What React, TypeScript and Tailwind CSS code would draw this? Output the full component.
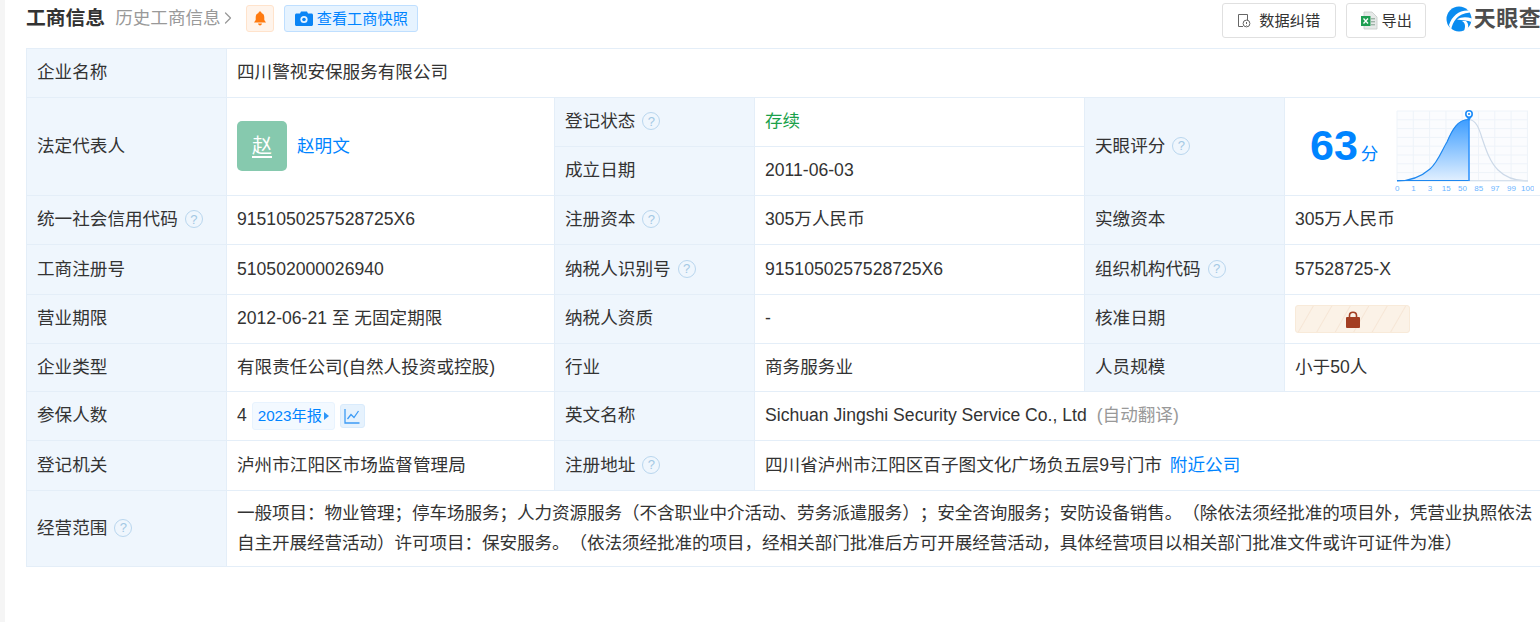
import React from "react";
import { ChevronRight } from "lucide-react";

const FONT = "font-['Liberation_Sans','Noto_Sans_CJK_SC',sans-serif]";
const label = "border border-[#e4eef8] bg-[#eff6fd] px-[10px] pb-[2px] text-left font-normal";
const value = "border border-[#e4eef8] bg-white px-[10px] pb-[2px]";

// full-width punctuation, as on the page
const SCOPE_1 =
  "一般项目\uFF1A物业管理\uFF1B停车场服务\uFF1B人力资源服务\uFF08不含职业中介活动、劳务派遣服务\uFF09\uFF1B安全咨询服务\uFF1B安防设备销售。\uFF08除依法须经批准的项目外\uFF0C凭营业执照依法";
const SCOPE_2 =
  "自主开展经营活动\uFF09许可项目\uFF1A保安服务。\uFF08依法须经批准的项目\uFF0C经相关部门批准后方可开展经营活动\uFF0C具体经营项目以相关部门批准文件或许可证件为准\uFF09";

const Help = () => (
  <span className="relative -top-[1px] ml-[7px] inline-flex h-[18px] w-[18px] items-center justify-center rounded-full border-[1.5px] border-[#b9d6ee] align-middle text-[13px] leading-none text-[#a3c8e4]">
    ?
  </span>
);

const Link = ({ children }: { children: React.ReactNode }) => (
  <span className="text-[#0084ff]">{children}</span>
);

const ScoreChart = () => {
  const cols = [0, 1, 2, 3, 4, 5, 6, 7, 8];
  const rows = [0, 1, 2, 3, 4, 5, 6, 7, 8];
  const ticks = ["0", "1", "3", "15", "50", "85", "97", "99", "100"];
  return (
    <svg width="140" height="90" viewBox="0 0 140 90" className="block">
      <defs>
        <linearGradient id="fill" x1="0" y1="0" x2="0" y2="1">
          <stop offset="0" stopColor="#3d9dff" />
          <stop offset="1" stopColor="#e2f0ff" />
        </linearGradient>
      </defs>
      <rect x="3" y="9" width="131" height="70" fill="#fbfcfe" />
      {cols.map((c) => (
        <line key={c} x1={3 + c * 16.3} x2={3 + c * 16.3} y1="9" y2="79" stroke="#eef3f9" strokeWidth="1" />
      ))}
      {rows.map((r) => (
        <line key={r} x1="3" x2="134" y1={9 + r * 8.8} y2={9 + r * 8.8} stroke="#eef3f9" strokeWidth="1" />
      ))}
      <path d="M3 79C18 79 28 74 36 67C44 60 48 48 53 40C58 28 64 17 75 17.5L75 79Z" fill="url(#fill)" />
      <path d="M3 79C18 79 28 74 36 67C44 60 48 48 53 40C58 28 64 17 75 17.5" fill="none" stroke="#1e88f0" strokeWidth="1.2" />
      <path d="M75 17.5C82 18 85 26 88 36C92 48 96 60 104 68C112 76 124 79 134 79" fill="none" stroke="#ccd9e8" strokeWidth="1.2" />
      <line x1="3" x2="75" y1="78.5" y2="78.5" stroke="#1e88f0" strokeWidth="1" />
      <line x1="134" x2="75" y1="78.5" y2="78.5" stroke="#d5e0ec" strokeWidth="1" />
      <line x1="75" x2="75" y1="16" y2="79" stroke="#3295ff" strokeWidth="1.6" />
      <circle cx="75" cy="12" r="3.2" fill="#fff" stroke="#1e8cf8" strokeWidth="1.6" />
      <circle cx="75" cy="12" r="1.1" fill="#1e8cf8" />
      <path d="M72.5 15L75 19L77.5 15Z" fill="#1e8cf8" />
      {ticks.map((t, i) => (
        <text key={t} x={3.3 + i * 16.3} y="88.5" textAnchor="middle" fontSize="8" fill="#6db6ff" fontFamily="Liberation Sans, sans-serif">
          {t}
        </text>
      ))}
    </svg>
  );
};

const Logo = () => (
  <svg width="26" height="26" viewBox="0 0 26 26" className="block shrink-0">
    <circle cx="13" cy="13" r="12.5" fill="#0a8cf0" />
    <path d="M5 24C7 15 11 8 24 6.5L22.5 4.5C13 4 6 10 3 19Z" fill="#fff" />
    <path d="M11 13.5C15 11 20 10.5 26 12.5L25.5 16C22 14.5 16 14 11 13.5Z" fill="#fff" />
    <path d="M16 15C19 16.5 20 20 18 25L21.5 23C23 20 22 16.5 20 15Z" fill="#fff" />
  </svg>
);

const ExcelIcon = () => (
  <svg width="18" height="19" viewBox="0 0 18 19" className="block">
    <path d="M4 1H12L17 6V18H4Z" fill="#e6e9e8" stroke="#c4c9c7" strokeWidth="0.8" />
    <rect x="11" y="7" width="4" height="1.4" fill="#9fb3a8" />
    <rect x="11" y="10" width="4" height="1.4" fill="#9fb3a8" />
    <rect x="11" y="13" width="4" height="1.4" fill="#9fb3a8" />
    <rect x="1" y="5" width="9.5" height="10" fill="#1e9e52" />
    <path d="M3.5 7.5L8 12.5M8 7.5L3.5 12.5" stroke="#fff" strokeWidth="1.3" />
  </svg>
);

const App = () => {
  return (
    <div className={`flex h-[622px] w-[1540px] overflow-hidden bg-white text-[17.6px] leading-[24px] text-[#333] [text-spacing-trim:space-all] ${FONT}`}>
      <div className="w-[5px] shrink-0 bg-[#f5f5f5]" />
      <div className="ml-[21px] w-[1600px] shrink-0">
        <div className="flex h-[48px] items-start">
          <div className="flex items-center pt-[5px]">
            <span className="relative -top-[1px] text-[19.8px] font-bold leading-[24px]">工商信息</span>
            <span className="relative -top-[1px] ml-[10px] text-[#999]">历史工商信息</span>
            <ChevronRight size={20} strokeWidth={1.5} className="relative -top-[1px] -ml-[3px] -mr-[2px] text-[#999]" />
            <span className="ml-[10px] flex h-[27px] w-[28px] items-center justify-center rounded-[3px] border border-[#ffe3cc] bg-[#fff4eb]">
              <svg width="14" height="15" viewBox="0 0 14 15">
                <path d="M7 0.5C8 0.5 8.5 1.2 8.5 2C10.5 2.6 11.3 4.2 11.3 6.5V9L13 11.5H1L2.7 9V6.5C2.7 4.2 3.5 2.6 5.5 2C5.5 1.2 6 0.5 7 0.5Z" fill="#ff7a0f" />
                <path d="M5 12.5H9C8.7 13.8 8 14.5 7 14.5C6 14.5 5.3 13.8 5 12.5Z" fill="#ff7a0f" />
              </svg>
            </span>
            <span className="ml-[10px] flex h-[27px] w-[134px] items-center rounded-[3px] border border-[#bfdfff] bg-[#e6f3ff] pl-[10px] text-[15.2px] text-[#0084ff]">
              <svg width="18" height="15" viewBox="0 0 18 15" className="mr-[4px] shrink-0">
                <path d="M1.5 2.5H5L6 0.5H12L13 2.5H16.5C17.3 2.5 18 3.2 18 4V13.5C18 14.3 17.3 15 16.5 15H1.5C0.7 15 0 14.3 0 13.5V4C0 3.2 0.7 2.5 1.5 2.5Z" fill="#0a84f5" />
                <circle cx="9" cy="8.5" r="3.6" fill="#e6f3ff" />
                <circle cx="9" cy="8.5" r="1.8" fill="#0a84f5" />
              </svg>
              查看工商快照
            </span>
          </div>
          <div className="ml-[804px] flex items-center pt-[3px] text-[15.2px]">
            <span className="flex h-[35px] w-[114px] items-center justify-center rounded-[3px] border border-[#e0e0e0] bg-white">
              <svg width="14" height="15" viewBox="0 0 14 15" fill="none" stroke="#666" strokeWidth="1" className="mr-[8px]">
                <path d="M6 13.5H1.5V1.5H10.5V7" />
                <circle cx="9.5" cy="10.5" r="3.4" />
                <path d="M9.5 9V11M9.5 12V12.6" />
              </svg>
              数据纠错
            </span>
            <span className="ml-[10px] flex h-[35px] w-[80px] items-center justify-center rounded-[3px] border border-[#e0e0e0] bg-white">
              <span className="mr-[4px]"><ExcelIcon /></span>
              导出
            </span>
            <span className="ml-[20px] -mt-[4px] flex items-center">
              <Logo />
              <span className="ml-[2px] text-[22px] font-bold leading-[26px] tracking-[0.5px] text-[#4d4d4d]">天眼查</span>
            </span>
          </div>
        </div>

        <table className="table-fixed border-collapse whitespace-nowrap">
          <colgroup>
            <col className="w-[200px]" />
            <col className="w-[328px]" />
            <col className="w-[200px]" />
            <col className="w-[330px]" />
            <col className="w-[200px]" />
            <col className="w-[300px]" />
          </colgroup>
          <tbody>
            <tr className="h-[49px]">
              <th className={label}>企业名称</th>
              <td className={value} colSpan={5}>四川警视安保服务有限公司</td>
            </tr>
            <tr className="h-[49px]">
              <th className={label} rowSpan={2}>法定代表人</th>
              <td className={value} rowSpan={2}>
                <div className="flex items-center">
                  <span className="flex h-[50px] w-[50px] items-center justify-center rounded-[5px] bg-[#86c9ae] text-[20px] text-white underline underline-offset-[3px]">赵</span>
                  <span className="ml-[10px]"><Link>赵明文</Link></span>
                </div>
              </td>
              <th className={label}>登记状态<Help /></th>
              <td className={`${value} text-[#1aa14b]`}>存续</td>
              <th className={label} rowSpan={2}>天眼评分<Help /></th>
              <td className="border border-[#e4eef8] bg-white px-[10px]" rowSpan={2}>
                <div className="flex items-start">
                  <span className="ml-[15px] mt-[18px] text-[43px] font-bold leading-[50px] text-[#0084ff]">63</span>
                  <span className="ml-[3px] mt-[40px] text-[#0084ff]">分</span>
                  <span className="ml-[16px]"><ScoreChart /></span>
                </div>
              </td>
            </tr>
            <tr className="h-[49px]">
              <th className={label}>成立日期</th>
              <td className={value}>2011-06-03</td>
            </tr>
            <tr className="h-[49px]">
              <th className={label}>统一社会信用代码<Help /></th>
              <td className={value}>9151050257528725X6</td>
              <th className={label}>注册资本<Help /></th>
              <td className={value}>305万人民币</td>
              <th className={label}>实缴资本</th>
              <td className={value}>305万人民币</td>
            </tr>
            <tr className="h-[50px]">
              <th className={label}>工商注册号</th>
              <td className={value}>510502000026940</td>
              <th className={label}>纳税人识别号<Help /></th>
              <td className={value}>9151050257528725X6</td>
              <th className={label}>组织机构代码<Help /></th>
              <td className={value}>57528725-X</td>
            </tr>
            <tr className="h-[49px]">
              <th className={label}>营业期限</th>
              <td className={value}>2012-06-21 至 无固定期限</td>
              <th className={label}>纳税人资质</th>
              <td className={value}>-</td>
              <th className={label}>核准日期</th>
              <td className="border border-[#e4eef8] bg-white px-[10px]">
                <span className="flex h-[28px] w-[115px] items-center justify-center rounded-[3px] border border-[#f8ead9] bg-[repeating-linear-gradient(120deg,#fbf2e7_0px,#fbf2e7_14px,#f6e6d6_15px,#fbf2e7_16px)]">
                  <svg width="16" height="17" viewBox="0 0 16 17">
                    <path d="M4.5 7V4.5C4.5 2.5 6 1.2 8 1.2C10 1.2 11.5 2.5 11.5 4.5V7" fill="none" stroke="#a33e22" strokeWidth="1.6" />
                    <rect x="1" y="6" width="14" height="11" rx="1" fill="#a33e22" />
                  </svg>
                </span>
              </td>
            </tr>
            <tr className="h-[48px]">
              <th className={label}>企业类型</th>
              <td className={value}>有限责任公司(自然人投资或控股)</td>
              <th className={label}>行业</th>
              <td className={value}>商务服务业</td>
              <th className={label}>人员规模</th>
              <td className={value}>小于50人</td>
            </tr>
            <tr className="h-[49px]">
              <th className={label}>参保人数</th>
              <td className="border border-[#e4eef8] bg-white px-[10px]">
                <div className="flex items-center">
                  <span className="relative -top-[1px]">4</span>
                  <span className="ml-[5px] flex h-[28px] w-[83px] items-center justify-center rounded-[3px] border border-[#e8f3fe] bg-[#f3f9ff] text-[15.2px] text-[#0084ff]">
                    2023年报
                    <span className="ml-[2px] h-0 w-0 border-y-[4px] border-l-[5px] border-y-transparent border-l-[#2f96f8]" />
                  </span>
                  <span className="ml-[5px] flex h-[24px] w-[25px] items-center justify-center rounded-[3px] border border-[#d9ebfc] bg-[#e6f2fd]">
                    <svg width="16" height="16" viewBox="0 0 16 16" fill="none" stroke="#3d9bf5" strokeWidth="1.3">
                      <path d="M1 1V15H15.5" />
                      <path d="M3.5 11L7 6.5L10 9.5L14.5 3" />
                    </svg>
                  </span>
                </div>
              </td>
              <th className={label}>英文名称</th>
              <td className={value} colSpan={3}>
                Sichuan Jingshi Security Service Co., Ltd<span className="ml-[10px] text-[#999]">(自动翻译)</span>
              </td>
            </tr>
            <tr className="h-[50px]">
              <th className={label}>登记机关</th>
              <td className={value}>泸州市江阳区市场监督管理局</td>
              <th className={label}>注册地址<Help /></th>
              <td className={value} colSpan={3}>
                四川省泸州市江阳区百子图文化广场负五层9号门市<span className="ml-[8px]"><Link>附近公司</Link></span>
              </td>
            </tr>
            <tr className="h-[76px]">
              <th className={label}>经营范围<Help /></th>
              <td className={`${value} leading-[30px] tracking-[-0.09px]`} colSpan={5}>
                {SCOPE_1}
                <br />
                {SCOPE_2}
              </td>
            </tr>
          </tbody>
        </table>
      </div>
    </div>
  );
};

export default App;
